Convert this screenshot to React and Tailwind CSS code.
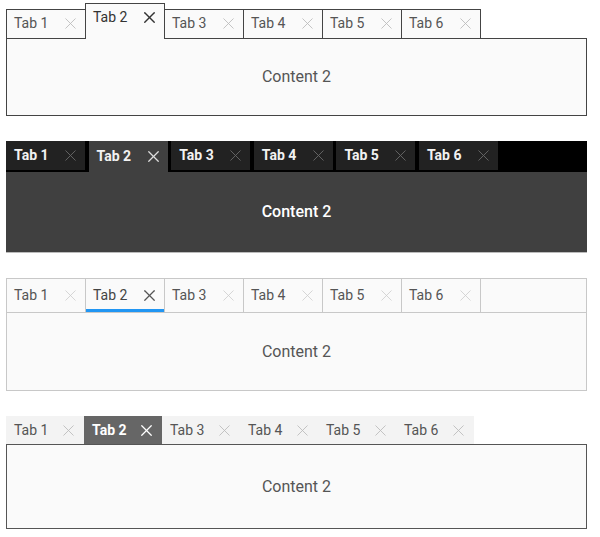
import { X } from "lucide-react";

const tabs = ["Tab 1", "Tab 2", "Tab 3", "Tab 4", "Tab 5", "Tab 6"];
const active = 1;

// classic bordered tabs, active one raised
function ClassicTabs() {
  return (
    <div>
      <div className="flex items-end h-[35px]">
        {tabs.map((t, i) => {
          const on = i === active;
          return (
            <div
              key={t}
              className={`relative flex items-start w-[80px] border border-b-0 border-[#444] bg-[#fafafa] pl-[7px] ${
                i > 0 ? "-ml-px" : ""
              } ${on ? "h-[36px] -mb-px z-10" : "h-[29px]"}`}
            >
              <div className="flex items-center h-[27px] w-full">
                <span className={on ? "text-[#333]" : "text-[#555]"}>{t}</span>
                <X
                  size={19}
                  strokeWidth={on ? 1.7 : 1.1}
                  className={`ml-auto mr-[5px] ${on ? "text-[#333]" : "text-[#bbb]"}`}
                />
              </div>
            </div>
          );
        })}
      </div>
      <div className="border border-[#444] bg-[#fafafa] h-[78px] flex items-center justify-center text-[16px] text-[#555]">
        Content 2
      </div>
    </div>
  );
}

function DarkTabs() {
  return (
    <div>
      <div className="flex gap-[3.6px] h-[31px] bg-black">
        {tabs.map((t, i) => {
          const on = i === active;
          return (
            <div
              key={t}
              className={`flex items-center w-[79px] pl-[8px] font-bold text-[#f2f2f2] ${
                on ? "bg-[#404040] h-[31px]" : "bg-[#222] h-[29px] shadow-[0_1px_0_#000]"
              }`}
            >
              <span>{t}</span>
              <X
                size={19}
                strokeWidth={on ? 1.6 : 1.2}
                className={`ml-auto mr-[5px] ${on ? "text-[#ddd]" : "text-[#666]"}`}
              />
            </div>
          );
        })}
      </div>
      <div className="bg-[#404040] h-[81px] border-b border-[#bbb] flex items-center justify-center text-[16px] font-medium text-white">
        Content 2
      </div>
    </div>
  );
}

function UnderlineTabs() {
  return (
    <div className="border border-[#c8c8c8] bg-[#fafafa]">
      <div className="flex h-[34px] border-b border-[#c8c8c8]">
        {tabs.map((t, i) => {
          const on = i === active;
          return (
            <div
              key={t}
              className="relative flex items-center w-[79px] border-r border-[#c8c8c8] pl-[7px]"
            >
              <span className={on ? "text-[#444]" : "text-[#555]"}>{t}</span>
              <X
                size={19}
                strokeWidth={on ? 1.5 : 1}
                className={`ml-auto mr-[5px] ${on ? "text-[#555]" : "text-[#ccc]"}`}
              />
              {on && (
                <div className="absolute left-0 right-0 bottom-0 h-[3px] bg-[#2196f3]" />
              )}
            </div>
          );
        })}
      </div>
      <div className="h-[77px] flex items-center justify-center text-[16px] text-[#555]">
        Content 2
      </div>
    </div>
  );
}

function PillTabs() {
  return (
    <div>
      <div className="flex h-[28px] w-[468px] bg-[#f3f3f3]">
        {tabs.map((t, i) => {
          const on = i === active;
          return (
            <div
              key={t}
              className={`flex items-center w-[78px] pl-[8px] ${
                on ? "bg-[#666] text-white font-bold" : "text-[#555]"
              }`}
            >
              <span>{t}</span>
              <X
                size={19}
                strokeWidth={on ? 1.6 : 1.1}
                className={`ml-auto mr-[6px] ${on ? "text-white" : "text-[#bbb]"}`}
              />
            </div>
          );
        })}
      </div>
      <div className="border border-[#555] bg-[#fafafa] h-[85px] flex items-center justify-center text-[16px] text-[#555]">
        Content 2
      </div>
    </div>
  );
}

export default function App() {
  return (
    <div className="w-[600px] h-[537px] bg-white pt-[3px] pl-[6px] pr-[13px] font-['Roboto',sans-serif] text-[14px]">
      <div className="flex flex-col gap-[25px]">
        <ClassicTabs />
        <DarkTabs />
        <UnderlineTabs />
        <PillTabs />
      </div>
    </div>
  );
}
